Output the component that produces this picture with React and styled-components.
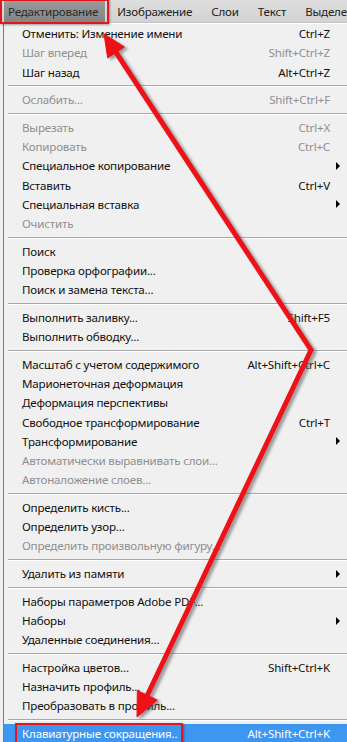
import React from "react";
import styled, { createGlobalStyle } from "styled-components";

const GlobalStyle = createGlobalStyle`
  html, body {
    margin: 0;
    padding: 0;
    background: #f0f0f0;
    overflow: hidden;
  }
  body {
    font-family: "Noto Sans", "Open Sans", sans-serif;
  }
`;

const menuBar = [
  { label: "Редактирование", active: true },
  { label: "Изображение" },
  { label: "Слои" },
  { label: "Текст" },
  { label: "Выделение" },
];

const groups = [
  [
    { label: "Отменить: Изменение имени", key: "Ctrl+Z" },
    { label: "Шаг вперед", key: "Shift+Ctrl+Z", off: true },
    { label: "Шаг назад", key: "Alt+Ctrl+Z" },
  ],
  [{ label: "Ослабить...", key: "Shift+Ctrl+F", off: true }],
  [
    { label: "Вырезать", key: "Ctrl+X", off: true },
    { label: "Копировать", key: "Ctrl+C", off: true },
    { label: "Специальное копирование", sub: true },
    { label: "Вставить", key: "Ctrl+V" },
    { label: "Специальная вставка", sub: true },
    { label: "Очистить", off: true },
  ],
  [
    { label: "Поиск" },
    { label: "Проверка орфографии..." },
    { label: "Поиск и замена текста..." },
  ],
  [
    { label: "Выполнить заливку...", key: "Shift+F5" },
    { label: "Выполнить обводку..." },
  ],
  [
    { label: "Масштаб с учетом содержимого", key: "Alt+Shift+Ctrl+C" },
    { label: "Марионеточная деформация" },
    { label: "Деформация перспективы" },
    { label: "Свободное трансформирование", key: "Ctrl+T" },
    { label: "Трансформирование", sub: true },
    { label: "Автоматически выравнивать слои...", off: true },
    { label: "Автоналожение слоев...", off: true },
  ],
  [
    { label: "Определить кисть..." },
    { label: "Определить узор..." },
    { label: "Определить произвольную фигуру...", off: true },
  ],
  [{ label: "Удалить из памяти", sub: true }],
  [
    { label: "Наборы параметров Adobe PDF..." },
    { label: "Наборы", sub: true },
    { label: "Удаленные соединения..." },
  ],
  [
    { label: "Настройка цветов...", key: "Shift+Ctrl+K" },
    { label: "Назначить профиль..." },
    { label: "Преобразовать в профиль..." },
  ],
  [{ label: "Клавиатурные сокращения..", key: "Alt+Shift+Ctrl+K", hot: true, boxed: true }],
];

const Page = styled.div`
  position: relative;
  width: 347px;
  height: 742px;
  overflow: hidden;
  background: #f0f0f0;
`;

const Bar = styled.nav`
  display: flex;
  align-items: stretch;
  gap: 8px;
  height: 22px;
  padding-left: 4px;
  background: linear-gradient(#dedede, #d3d3d3);
  border-bottom: 1px solid #c4c4c4;
  white-space: nowrap;
`;

const BarItem = styled.div`
  position: relative;
  display: flex;
  align-items: center;
  padding: 0 7px 0 4px;
  font-size: 11.6px;
  letter-spacing: -0.2px;
  color: ${(p) => (p.$active ? "#2a2a2a" : "#222")};
  background: ${(p) => (p.$active ? "linear-gradient(#9a9a9a, #848484)" : "transparent")};
`;

const RedBox = styled.span`
  position: absolute;
  inset: ${(p) => p.$inset || "-1px -4px -2px -4px"};
  border: 2px solid #e4161c;
  box-shadow: 1px 1px 2px rgba(0, 0, 0, 0.35);
  pointer-events: none;
`;

const Drop = styled.div`
  display: flex;
  flex-direction: column;
  margin-left: 3px;
  border-left: 1px solid #7a7a7a;
  border-top: 1px solid #ffffff;
  background: #f0f0f0;
`;

const Row = styled.div`
  position: relative;
  display: grid;
  grid-template-columns: 1fr auto 17px;
  align-items: center;
  height: 19.25px;
  padding-left: 18px;
  font-size: 11.6px;
  letter-spacing: -0.2px;
  white-space: nowrap;
  color: ${(p) => (p.$hot ? "#ffffff" : p.$off ? "#8f8f8f" : "#111")};
  background: ${(p) => (p.$hot ? "#3d96f0" : "transparent")};
`;

const Label = styled.span`
  position: relative;
  justify-self: start;
`;

const Key = styled.span`
  text-align: right;
`;

const Arrow = styled.span`
  justify-self: start;
  margin-left: 6px;
  width: 0;
  height: 0;
  border-top: 4px solid transparent;
  border-bottom: 4px solid transparent;
  border-left: 4px solid #000;
`;

const Sep = styled.div`
  height: 8.4px;
  display: flex;
  align-items: center;
  padding-left: 4px;
  &::after {
    content: "";
    flex: 1;
    height: 1px;
    background: #a8a8a8;
    box-shadow: 0 1px 0 #ffffff;
  }
`;

const Overlay = styled.svg`
  position: absolute;
  left: 0;
  top: 0;
  pointer-events: none;
`;

function arrowHead(tip, from, len, half) {
  const dx = from[0] - tip[0];
  const dy = from[1] - tip[1];
  const d = Math.hypot(dx, dy);
  const ux = dx / d;
  const uy = dy / d;
  const bx = tip[0] + ux * len;
  const by = tip[1] + uy * len;
  const a = [bx - uy * half, by + ux * half];
  const b = [bx + uy * half, by - ux * half];
  return `${tip[0]},${tip[1]} ${a[0]},${a[1]} ${b[0]},${b[1]}`;
}

const Arrows = () => {
  const v = [311, 350];
  const t1 = [104, 34];
  const t2 = [137, 717];
  const shaft = (tip) => {
    const dx = v[0] - tip[0];
    const dy = v[1] - tip[1];
    const d = Math.hypot(dx, dy);
    return [tip[0] + (dx / d) * 18, tip[1] + (dy / d) * 18];
  };
  const s1 = shaft(t1);
  const s2 = shaft(t2);
  const lines = (
    <>
      <polyline
        points={`${s1[0]},${s1[1]} ${v[0]},${v[1]} ${s2[0]},${s2[1]}`}
        fill="none"
        strokeWidth="5"
        strokeLinejoin="miter"
      />
      <polygon points={arrowHead(t1, v, 22, 10)} />
      <polygon points={arrowHead(t2, v, 24, 11)} />
    </>
  );
  return (
    <Overlay width="347" height="742" viewBox="0 0 347 742">
      <defs>
        <filter id="blur" x="-10%" y="-10%" width="120%" height="120%">
          <feGaussianBlur stdDeviation="1.6" />
        </filter>
      </defs>
      <g transform="translate(3,2)" fill="#505050" stroke="#505050" opacity="0.55" filter="url(#blur)">
        {lines}
      </g>
      <g fill="#ee1218" stroke="#ee1218">{lines}</g>
    </Overlay>
  );
};

export default function App() {
  return (
    <>
      <GlobalStyle />
      <Page>
        <Bar>
          {menuBar.map((m) => (
            <BarItem key={m.label} $active={m.active}>
              {m.label}
              {m.active && <RedBox />}
            </BarItem>
          ))}
        </Bar>
        <Drop>
          {groups.map((g, gi) => (
            <React.Fragment key={gi}>
              {gi > 0 && <Sep />}
              {g.map((it) => (
                <Row key={it.label} $off={it.off} $hot={it.hot}>
                  <Label>
                    {it.label}
                    {it.boxed && <RedBox $inset="-3px -6px -4px -7px" />}
                  </Label>
                  <Key>{it.key}</Key>
                  {it.sub ? <Arrow /> : <span />}
                </Row>
              ))}
            </React.Fragment>
          ))}
        </Drop>
        <Arrows />
      </Page>
    </>
  );
}
